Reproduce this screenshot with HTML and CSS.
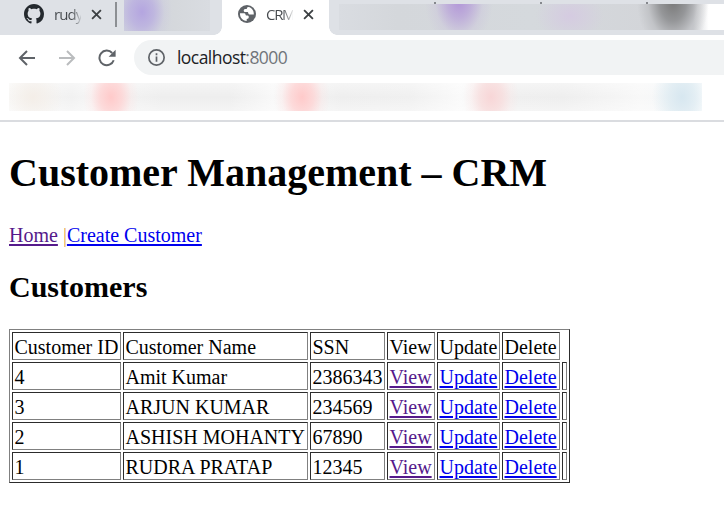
FILE: index.html
```html
<!DOCTYPE html>
<html lang="en">
<head>
<meta charset="utf-8">
<title>CRM</title>
<link rel="stylesheet" href="styles.css">
</head>
<body>
<header class="browser">
  <div class="tabs">
    <div class="tab tab-github">
      <svg class="github" viewBox="0 0 16 16"><path fill="#24292e" d="M8 0C3.58 0 0 3.58 0 8c0 3.54 2.29 6.53 5.47 7.59.4.07.55-.17.55-.38 0-.19-.01-.82-.01-1.49-2.01.37-2.53-.49-2.69-.94-.09-.23-.48-.94-.82-1.13-.28-.15-.68-.52-.01-.53.63-.01 1.08.58 1.23.82.72 1.21 1.87.87 2.33.66.07-.52.28-.87.51-1.07-1.78-.2-3.64-.89-3.64-3.95 0-.87.31-1.59.82-2.15-.08-.2-.36-1.02.08-2.12 0 0 .67-.21 2.2.82.64-.18 1.32-.27 2-.27s1.36.09 2 .27c1.53-1.04 2.2-.82 2.2-.82.44 1.1.16 1.92.08 2.12.51.56.82 1.27.82 2.15 0 3.07-1.87 3.75-3.65 3.95.29.25.54.73.54 1.48 0 1.07-.01 1.93-.01 2.2 0 .21.15.46.55.38A8.01 8.01 0 0 0 16 8c0-4.42-3.58-8-8-8z"/></svg>
      <span class="title title-github">rudy</span>
      <svg class="close" viewBox="0 0 12 12"><path d="M1.2 1.2l9.6 9.6M10.8 1.2l-9.6 9.6"/></svg>
    </div>
    <div class="divider"></div>
    <div class="haze haze-left"></div>
    <div class="tab tab-active">
      <svg class="globe" viewBox="0 0 18 18"><circle cx="9" cy="9" r="9" fill="#5f6368"/><path fill="#fff" d="M10.600 2.100C9.200 2.200 8.800 3 8.800 4H7.200C6 4 5.500 5 5.800 6c.2.900 1 1.100 2.200 1.100h1.200c1 0 1 .700 1.200 1.500.200.800.800 1 1.800 1h3.600c.3-3.700-1.900-6.800-5.200-7.500zM2 8.300c-.3 4.100 2.600 7.300 6.700 7.700v-1.900c1.400-.100 2.100-.800 2.100-2 0-1.100-.800-1.500-1.900-1.500-1.200 0-1.200-.500-1.400-1.200-.200-.800-.800-1.100-1.800-1.100z"/></svg>
      <span class="title title-crm">CRM</span>
      <svg class="close" viewBox="0 0 12 12"><path d="M1.200 1.200l9.600 9.600M10.800 1.200l-9.600 9.600"/></svg>
    </div>
    <div class="rest">
      <div class="ticks"><i></i><i></i><i></i></div>
      <div class="haze haze-right"></div>
    </div>
  </div>
  <div class="toolbar">
    <svg class="nav" viewBox="0 0 18 18"><path d="M17 9H2M9 2L2 9l7 7"/></svg>
    <svg class="nav nav-off" viewBox="0 0 18 18"><path d="M1 9h15M9 2l7 7-7 7"/></svg>
    <svg class="nav" viewBox="0 0 18 18"><path d="M15.700 11.200A7.300 7.300 0 1 1 14.200 4"/><path class="solid" d="M17.600.800v7h-7z"/></svg>
    <div class="address">
      <svg class="info" viewBox="0 0 16 16"><circle cx="8" cy="8" r="7.200"/><path d="M8 7v5M8 4v1.800"/></svg>
      <span class="url">localhost<span class="port">:8000</span></span>
    </div>
  </div>
  <div class="bookmarks"><div class="bookmark-haze"></div></div>
</header>
<main>
  <h1>Customer Management – CRM</h1>
  <nav class="links"><a class="seen" href="#">Home</a> <span class="bar">|</span><a href="#">Create Customer</a></nav>
  <h2>Customers</h2>
  <table>
    <colgroup><col class="c-id"><col class="c-name"><col class="c-ssn"><col class="c-view"><col class="c-update"><col class="c-delete"><col class="c-end"></colgroup>
    <tr><td>Customer ID</td><td>Customer Name</td><td>SSN</td><td>View</td><td>Update</td><td>Delete</td></tr>
    <tr><td>4</td><td>Amit Kumar</td><td>2386343</td><td><a class="seen" href="#">View</a></td><td><a href="#">Update</a></td><td><a href="#">Delete</a></td><td></td></tr>
    <tr><td>3</td><td>ARJUN KUMAR</td><td>234569</td><td><a class="seen" href="#">View</a></td><td><a href="#">Update</a></td><td><a href="#">Delete</a></td><td></td></tr>
    <tr><td>2</td><td>ASHISH MOHANTY</td><td>67890</td><td><a class="seen" href="#">View</a></td><td><a href="#">Update</a></td><td><a href="#">Delete</a></td><td></td></tr>
    <tr><td>1</td><td>RUDRA PRATAP</td><td>12345</td><td><a class="seen" href="#">View</a></td><td><a href="#">Update</a></td><td><a href="#">Delete</a></td><td></td></tr>
  </table>
</main>
</body>
</html>
```
FILE: styles.css
```css
* { box-sizing: border-box; }
body { margin: 0; background: #fff; color: #000; font-family: "Liberation Serif", serif; font-size: 20px; overflow: hidden; }
svg { display: block; flex: none; }

.browser { height: 122px; border-bottom: 2px solid #dadce0; font-family: "Open Sans", "Noto Sans", sans-serif; }
.tabs { display: flex; height: 35px; background: #dee1e6; }
.tab { display: flex; align-items: center; height: 28px; flex: none; }
.tab-github { width: 115px; padding-left: 24px; }
.github { width: 20px; height: 20px; margin-right: 10px; }
.title { width: 27px; margin-right: 10px; font-size: 15px; line-height: 28px; white-space: nowrap; color: transparent; -webkit-background-clip: text; background-clip: text; }
.title-github { letter-spacing: -.9px; background-image: linear-gradient(90deg, #45494d 65%, #45494d22); }
.title-crm { letter-spacing: -1.300px; background-image: linear-gradient(90deg, #45494d 62%, #45494d22); }
.close { width: 11px; height: 11px; fill: none; stroke: #3c4043; stroke-width: 2; }
.divider { width: 2px; height: 25px; margin: 2px 7px 0 0; background: #8c8f93; flex: none; }
.haze-left { width: 86px; height: 31px; flex: none; background: radial-gradient(ellipse 30px 38px at 18px 12px, #b4a5e0, #b8ace0bb 40%, #c7c3de44 75%, #d5d8dd00), linear-gradient(90deg, #cdcfde, #d5d8dc 60%, #d9dce1); }
.tab-active { width: 131px; height: 35px; padding: 0 0 7px 28px; background: linear-gradient(#fff, #fff) 12px 0 / 107px 35px no-repeat, radial-gradient(circle at 0 0, #dee1e6 7.500px, #fff 8px) 4px 27px / 8px 8px no-repeat, radial-gradient(circle at 100% 0, #dee1e6 7.500px, #fff 8px) 119px 27px / 8px 8px no-repeat; }
.globe { width: 18px; height: 18px; margin-right: 10px; }
.rest { flex: 1; margin-left: -2px; }
.ticks { display: flex; gap: 104px; height: 4px; padding: 2px 0 0 95px; }
.ticks i { width: 2px; height: 2px; background: #85888d; }
.haze-right { height: 26px; background: radial-gradient(ellipse 34px 48px at 120px -3px, #b296d8, #b7a0d9bb 35%, #c5b9dc44 70%, #c5b9dc00), radial-gradient(ellipse 34px 25px at 231px 12px, #d5cbe1, #d5cbe100), radial-gradient(ellipse 36px 55px at 334px -4px, #777, #858688cc 38%, #a0a1a455 70%, #b0b1b400), linear-gradient(90deg, #d9dce1, #d4d7db 15%, #d5d9dd 50%, #d3d5d9 80%, #d3d5d9 92%, #fff 96%); }

.toolbar { display: flex; align-items: center; height: 45px; padding: 0 0 0 18px; }
.nav { width: 18px; height: 18px; margin-right: 22px; fill: none; stroke: #5f6368; stroke-width: 2; }
.nav-off { stroke: #babcbe; }
.nav .solid { fill: #5f6368; stroke: none; }
.address { display: flex; align-items: center; flex: 1; height: 35px; margin-left: -4px; padding-left: 14px; border-radius: 18px 0 0 18px; background: #f1f3f4; }
.info { width: 17px; height: 17px; margin-right: 12px; fill: none; stroke: #5f6368; stroke-width: 1.6; }
.url { font-size: 17.5px; line-height: 35px; color: #202124; letter-spacing: -.55px; }
.port { color: #70757a; }
.bookmarks { padding: 3px 0 0 9px; }
.bookmark-haze { width: 693px; height: 28px; background: radial-gradient(ellipse 28px 38px at 102px 14px, #ffcaca, #ffd0d0bb 40%, #fdd4 72%, #fdd0), radial-gradient(ellipse 28px 38px at 293px 14px, #ffcaca, #ffd0d0bb 40%, #fdd4 72%, #fdd0), radial-gradient(ellipse 28px 38px at 482px 14px, #f8d6d7, #f8dadabb 40%, #fbe0e044 72%, #fdd0), radial-gradient(ellipse 30px 40px at 673px 14px, #d7e7f0, #dceaf1bb 45%, #e0edf300), radial-gradient(ellipse 30px 28px at 24px 14px, #f4eee8, #f4eee800), linear-gradient(#fff6, #fff0 50%, #fff6), linear-gradient(90deg, #f9f9f8, #f1f1f1 9%, #f6f6f6 12%, #eee 22%, #eee 32%, #f8f8f8 38%, #eee 48%, #f0f0f0 58%, #fafafa 65%, #efefef 73%, #eee 80%, #f8f8f8 91%, #f4f7f9 98%, #fff); }

main { padding: 0 9px; }
h1 { margin: 28px 0 0; font-size: 40px; line-height: 46px; white-space: nowrap; }
.links { margin-top: 28px; line-height: 23px; }
a { color: #0000ee; text-decoration: underline; text-decoration-thickness: 2px; text-underline-offset: 2px; }
a.seen { color: #551a8b; }
.bar { color: #e5a54b; }
h2 { margin: 23px 0 0; font-size: 30px; line-height: 34px; }
table { table-layout: fixed; width: 561px; margin-top: 25px; border: 1px solid; border-color: #808080 #2c2c2c #2c2c2c #808080; border-spacing: 2px; }
td { height: 28px; padding: 2px 0 0 1.500px; border: 1px solid; border-color: #2c2c2c #808080 #808080 #2c2c2c; line-height: 24px; white-space: nowrap; }
.c-id { width: 109px; }
.c-name { width: 185px; }
.c-ssn { width: 75px; }
.c-view { width: 48px; }
.c-update { width: 63px; }
.c-delete { width: 58px; }
.c-end { width: 5px; }
```
